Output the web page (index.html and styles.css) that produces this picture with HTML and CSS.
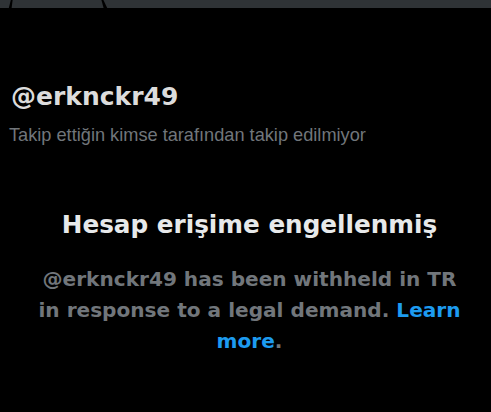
FILE: index.html
```html
<!DOCTYPE html>
<html lang="tr">
<head>
    <meta charset="UTF-8">
    <meta name="viewport" content="width=device-width, initial-scale=1.0">
    <title>@erknckr49</title>
    <link rel="stylesheet" href="styles.css">
</head>
<body>
    <div class="banner">
        <svg class="avatar-edge" width="491" height="8" viewBox="0 0 491 8">
            <polygon points="10.8,0 12.6,0 11.6,8 8.8,8" fill="#000"/>
            <polygon points="101.4,0 103.4,0 107.2,8 103.6,8" fill="#000"/>
        </svg>
    </div>

    <main class="profile">
        <div class="user">
            <h1 class="handle">@erknckr49</h1>
            <p class="follow-note">Takip ettiğin kimse tarafından takip edilmiyor</p>
        </div>

        <section class="withheld">
            <h2 class="withheld-title">Hesap erişime engellenmiş</h2>
            <p class="withheld-text">@erknckr49 has been withheld in TR in response to a legal demand. <a href="#" class="learn-more">Learn more</a>.</p>
        </section>
    </main>
</body>
</html>
```

FILE: styles.css
```css
body {
    margin: 0;
    background: #000;
    color: #e7e9ea;
    font-family: "DejaVu Sans", sans-serif;
    height: 100vh;
    overflow: hidden;
}

.banner {
    height: 8px;
    background: #2f3336;
}

.avatar-edge {
    display: block;
}

.user {
    padding: 75px 12px 0 9px;
}

.handle {
    margin: 0 0 0 2px;
    font-size: 25px;
    line-height: 28px;
    font-weight: bold;
    color: #dcdcdc;
}

.follow-note {
    margin: 13px 0 0;
    font-family: "Liberation Sans", sans-serif;
    font-size: 18.2px;
    line-height: 22px;
    color: #71767b;
}

.withheld {
    margin: 63px auto 0;
    padding-left: 8px;
    width: 432px;
    text-align: center;
}

.withheld-title {
    margin: 0;
    font-size: 24.7px;
    line-height: 32px;
    font-weight: bold;
    color: #e7e9ea;
}

.withheld-text {
    margin: 23px 0 0;
    font-size: 20.1px;
    line-height: 31px;
    font-weight: bold;
    color: #71767b;
}

.learn-more {
    color: #1d9bf0;
    text-decoration: none;
}
```
